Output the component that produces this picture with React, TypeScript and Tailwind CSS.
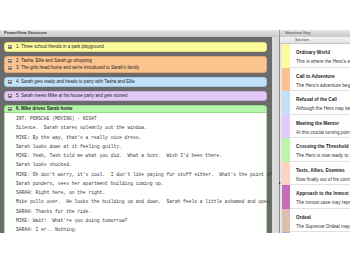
import React from 'react';

type Card = { id: number; tone: string; size: string; rows: string[] };

const cards: Card[] = [
  { id: 1, tone: 'bg-[#fdfc9c] border-[#e2dc7c]', size: 'h-[10px]', rows: ['1. Three school friends in a park playground'] },
  {
    id: 2,
    tone: 'bg-[#fbc48f] border-[#e2a874]',
    size: 'h-[17px]',
    rows: ['2. Tasha, Ellie and Sarah go shopping', "3. The girls head home and we're introduced to Sarah's family"],
  },
  { id: 4, tone: 'bg-[#c2e2fa] border-[#a2c6e4]', size: 'h-[10px]', rows: ['4. Sarah gets ready and heads to party with Tasha and Ellie'] },
  { id: 5, tone: 'bg-[#e4c9f6] border-[#c8acdf]', size: 'h-[10px]', rows: ['5. Sarah meets Mike at his house party and gets stoned'] },
];

const script = [
  'INT. PORSCHE (MOVING) - NIGHT',
  'Silence.  Sarah stares solemnly out the window.',
  "MIKE: By the way, that's a really nice dress.",
  'Sarah looks down at it feeling guilty.',
  "MIKE: Yeah, Tash told me what you did.  What a buzz.  Wish I'd been there.",
  'Sarah looks shocked.',
  "MIKE: Oh don't worry, it's cool.  I don't like paying for stuff either.  What's the point of",
  'Sarah ponders, sees her apartment building coming up.',
  'SARAH: Right here, on the right.',
  'Mike pulls over.  He looks the building up and down.  Sarah feels a little ashamed and open',
  'SARAH: Thanks for the ride.',
  "MIKE: Wait!  What're you doing tomorrow?",
  'SARAH: I er.. Nothing.',
];

const keys = [
  { title: 'Ordinary World', desc: "This is where the Hero's existence before the present story begins", strip: 'bg-[#fdfb9e]' },
  { title: 'Call to Adventure', desc: "The Hero's adventure begins when he receives a call to action", strip: 'bg-[#f9c190]' },
  { title: 'Refusal of the Call', desc: 'Although the Hero may be eager to accept the quest', strip: 'bg-[#c2e1f9]' },
  { title: 'Meeting the Mentor', desc: 'At this crucial turning point the Hero needs guidance', strip: 'bg-[#e5c9f6]' },
  { title: 'Crossing the Threshold', desc: 'The Hero is now ready to act upon his call to adventure', strip: 'bg-[#b9f5ab]' },
  { title: 'Tests, Allies, Enemies', desc: 'Now finally out of his comfort zone the Hero is confronted', strip: 'bg-[#fdd3c3]' },
  { title: 'Approach to the Inmost Cave', desc: 'The inmost cave may represent many things', strip: 'bg-[#c56cb9]' },
  { title: 'Ordeal', desc: 'The Supreme Ordeal may be a dangerous physical test', strip: 'bg-[#dbbfae]' },
  { title: 'Reward', desc: 'After surviving death the Hero earns his reward', strip: 'bg-[#c59fe0]' },
];

const Expander = () => (
  <div className="w-[4px] h-[4px] shrink-0 border-[0.5px] border-[#8a8a8a] bg-[#e9e9e9] flex items-center justify-center">
    <div className="w-[2px] h-[0.5px] bg-[#555]" />
  </div>
);

const App: React.FC = () => {
  return (
    <div className="w-[350px] h-[263px] bg-white pt-[30px] overflow-hidden font-['Liberation_Sans',Arial,sans-serif] text-[#222]">
      <div className="flex h-[203px]">
        {/* PowerView structure */}
        <div className="w-[280px] flex flex-col">
          <div className="h-[7px] flex items-center pl-[4px] bg-linear-to-b from-[#e4e4e4] to-[#c8c8c8] border-r border-[#9a9a9a] text-[4.3px] font-bold text-[#3a3a3a]">
            PowerView Structure
          </div>
          <div className="flex h-[196px]">
            <div className="w-[272px] bg-[#6b6b6b] overflow-hidden pl-[4px] pr-[5px] pt-[5px] flex flex-col gap-[4px]">
              {cards.map((card) => (
                <div
                  key={card.id}
                  className={`shrink-0 rounded-[3px] border flex flex-col justify-center pl-[3px] ${card.size} ${card.tone}`}
                >
                  {card.rows.map((row) => (
                    <div key={row} className="h-[7px] flex items-center gap-[4px] text-[4.5px] whitespace-nowrap">
                      <Expander />
                      <span>{row}</span>
                    </div>
                  ))}
                </div>
              ))}
              <div className="flex-1 flex flex-col">
                <div className="h-[8px] shrink-0 rounded-t-[3px] bg-[#b5f7a9] border border-[#96dc88] pl-[3px] flex items-center gap-[4px] text-[4.5px] font-bold whitespace-nowrap">
                  <Expander />
                  <span>6. Mike drives Sarah home</span>
                </div>
                <div className="flex-1 bg-white border-x border-[#a8e29b] pl-[11px] pt-[1px] font-['Liberation_Mono','Courier_New',monospace] text-[4.65px] leading-[9.25px] text-[#3a3a3a] whitespace-pre">
                  {script.map((line) => (
                    <div key={line}>{line}</div>
                  ))}
                </div>
              </div>
            </div>
            <div className="w-[7px] bg-[#dadada]" />
            <div className="w-[1px] bg-[#8e8e8e] relative">
              <div className="absolute left-0 top-[145px] w-0 h-0 border-y-[1.5px] border-y-transparent border-l-[2px] border-l-[#222]" />
            </div>
          </div>
        </div>

        {/* Structure key */}
        <div className="flex-1 flex flex-col overflow-hidden">
          <div className="h-[7px] shrink-0 flex items-center pl-[5px] bg-linear-to-b from-[#e4e4e4] to-[#c8c8c8] text-[4.2px] text-[#3a3a3a] whitespace-nowrap">
            Structure Key
          </div>
          <div className="h-[7px] shrink-0 flex items-center pl-[15px] bg-linear-to-b from-[#f4f4f4] to-[#e2e2e2] border-b border-[#c8c8c8] text-[4.2px] text-[#444]">
            Section
          </div>
          {keys.map((k) => (
            <div key={k.title} className="h-[23.5px] shrink-0 flex">
              <div className="w-[2px] bg-[#e6e6e6]" />
              <div className={`w-[8px] ${k.strip}`} />
              <div className="flex-1 pl-[6px] pt-[6px] border-b border-[#e0e0e0] bg-white whitespace-nowrap overflow-hidden">
                <div className="text-[4.7px] leading-[6px] font-bold text-[#222]">{k.title}</div>
                <div className="mt-[3px] text-[4.7px] leading-[6px] text-[#333]">{k.desc}</div>
              </div>
            </div>
          ))}
        </div>
      </div>
    </div>
  );
};

export default App;
